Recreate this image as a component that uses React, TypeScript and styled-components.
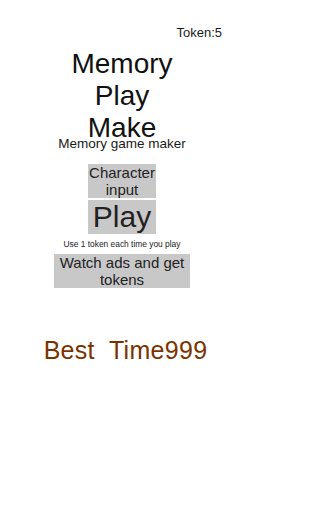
import React from 'react'
import styled, { createGlobalStyle } from 'styled-components'

const GlobalStyle = createGlobalStyle`
  html, body {
    margin: 0;
    padding: 0;
    background: #fff;
  }
  body {
    font-family: "Liberation Sans", Arial, sans-serif;
  }
`

const Screen = styled.div`
  width: 244px;
  height: 512px;
  display: flex;
  flex-direction: column;
  align-items: center;
  background: #fff;
  overflow: hidden;
`

const TokenRow = styled.div`
  align-self: stretch;
  box-sizing: border-box;
  padding: 25px 22px 0 0;
  text-align: right;
  font-size: 13px;
  line-height: 15px;
  color: #1a1a1a;
`

const Title = styled.h1`
  margin: 8px 0 0;
  font-size: 28px;
  line-height: 32px;
  font-weight: normal;
  text-align: center;
  color: #111;
`

// the subtitle sits partly under the last title line, as in the game screen
const Subtitle = styled.div`
  margin-top: -8px;
  font-size: 13.5px;
  line-height: 15.5px;
  color: #1a1a1a;
`

const GreyButton = styled.button<{ $w: number; $size: number; $lh: number; $mt: number }>`
  box-sizing: border-box;
  width: ${(p) => p.$w}px;
  height: 34px;
  margin-top: ${(p) => p.$mt}px;
  padding: 0;
  border: none;
  background: #c8c8c8;
  color: #222;
  font-family: inherit;
  font-size: ${(p) => p.$size}px;
  line-height: ${(p) => p.$lh}px;
  text-align: center;
  display: block;
  cursor: pointer;
`

const Notice = styled.div`
  margin-top: 5px;
  font-size: 8.4px;
  line-height: 10px;
  color: #222;
`

const BestTime = styled.div`
  margin-top: 48px;
  padding-left: 7px;
  font-size: 25px;
  line-height: 29px;
  letter-spacing: 0.3px;
  color: #7a3300;
  white-space: pre;
`

export default function App() {
  return (
    <>
      <GlobalStyle />
      <Screen>
        <TokenRow>Token:5</TokenRow>
        <Title>
          Memory
          <br />
          Play
          <br />
          Make
        </Title>
        <Subtitle>Memory game maker</Subtitle>
        <GreyButton $w={68} $size={15} $lh={17} $mt={12.5}>
          Character
          <br />
          input
        </GreyButton>
        <GreyButton $w={68} $size={30} $lh={30} $mt={2}>
          Play
        </GreyButton>
        <Notice>Use 1 token each time you play</Notice>
        <GreyButton $w={136} $size={15} $lh={17} $mt={5}>
          Watch ads and get
          <br />
          tokens
        </GreyButton>
        <BestTime>{'Best  Time999'}</BestTime>
      </Screen>
    </>
  )
}
